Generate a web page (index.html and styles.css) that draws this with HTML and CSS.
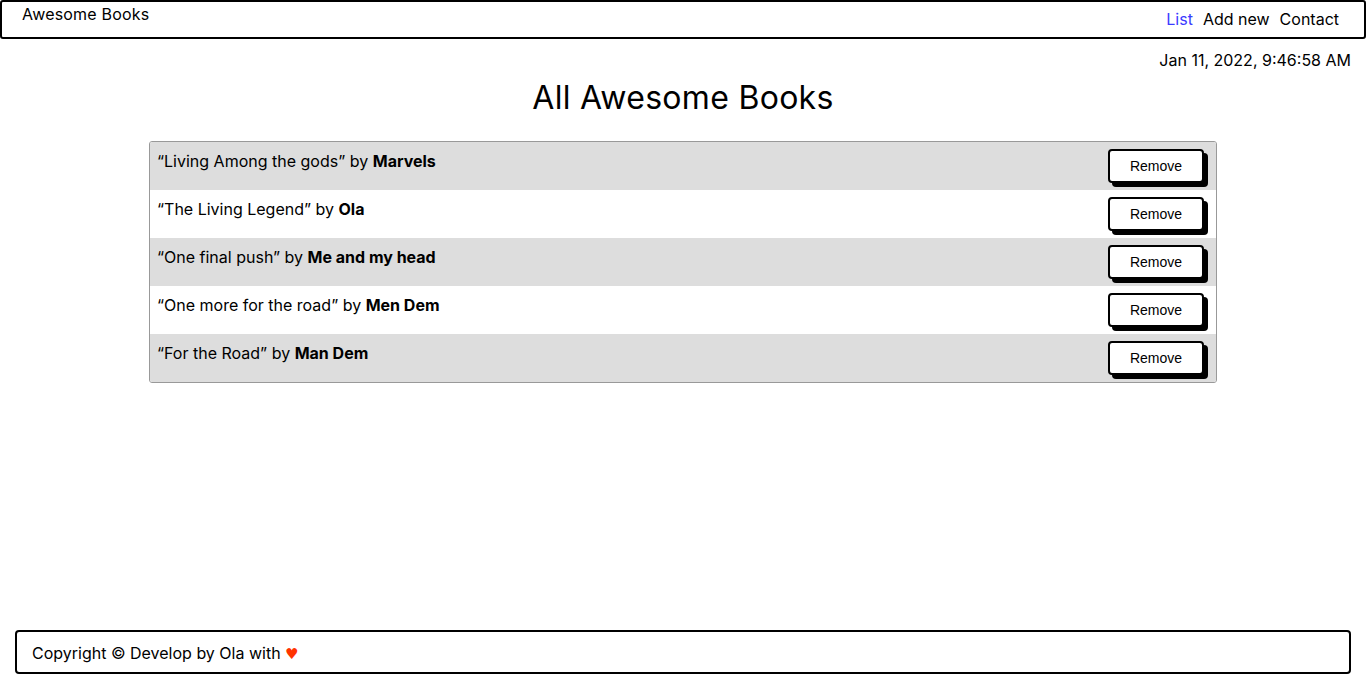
FILE: index.html
```html
<!DOCTYPE html>
<html lang="en">
<head>
<meta charset="utf-8">
<title>Awesome Books</title>
<link rel="stylesheet" href="styles.css">
</head>
<body>
<header class="topbar">
  <span class="logo">Awesome Books</span>
  <nav class="nav">
    <a class="nav-link active" href="#">List</a>
    <a class="nav-link" href="#">Add new</a>
    <a class="nav-link" href="#">Contact</a>
  </nav>
</header>
<main class="main">
  <p class="date">Jan 11, 2022, 9:46:58 AM</p>
  <h1 class="title">All Awesome Books</h1>
  <ul class="book-list">
    <li class="book odd"><span class="book-text">“Living Among the gods” by <b>Marvels</b></span><button class="remove">Remove</button></li>
    <li class="book"><span class="book-text">“The Living Legend” by <b>Ola</b></span><button class="remove">Remove</button></li>
    <li class="book odd"><span class="book-text">“One final push” by <b>Me and my head</b></span><button class="remove">Remove</button></li>
    <li class="book"><span class="book-text">“One more for the road” by <b>Men Dem</b></span><button class="remove">Remove</button></li>
    <li class="book odd"><span class="book-text">“For the Road” by <b>Man Dem</b></span><button class="remove">Remove</button></li>
  </ul>
</main>
<footer class="footer">
  <p class="copy">Copyright © Develop by Ola with <span class="heart">♥</span></p>
</footer>
</body>
</html>
```
FILE: styles.css
```css
* { box-sizing: border-box; }
html, body { height: 100%; }
body {
  margin: 0;
  font-family: "Inter", "Open Sans", sans-serif;
  font-size: 16px;
  color: #000;
  display: flex;
  flex-direction: column;
  min-height: 100vh;
}
.topbar {
  height: 39px;
  border: 2px solid #000;
  border-radius: 3px;
  display: flex;
  justify-content: space-between;
  align-items: flex-start;
  padding: 0 25px 0 20px;
}
.logo { padding-top: 2px; line-height: 20px; letter-spacing: 0.2px; }
.nav { display: flex; gap: 10px; padding-top: 7px; line-height: 20px; }
.nav-link { color: #000; text-decoration: none; }
.nav-link.active { color: #3b3bff; }
.main { padding: 0 15px; flex: 1; }
.date { margin: 10px 0 0; text-align: right; line-height: 22px; }
.title {
  margin: 3px 0 0;
  text-align: center;
  font-weight: 400;
  font-size: 32px;
  line-height: 48px;
  letter-spacing: 0.3px;
}
.book-list {
  list-style: none;
  margin: 19px auto 0;
  padding: 0;
  width: 1068px;
  border: 1px solid #999;
  border-radius: 3px;
  overflow: hidden;
}
.book {
  height: 48px;
  display: flex;
  justify-content: space-between;
  align-items: flex-start;
  padding: 7px 12px 0 7px;
}
.book.odd { background: #ddd; }
.book-text { line-height: 22px; padding-top: 1px; }
.book-text b { font-weight: 700; }
.remove {
  width: 96px;
  height: 34px;
  background: #fff;
  border: 2px solid #000;
  border-radius: 4px;
  box-shadow: 4px 4px 0 #000;
  font-family: "Liberation Sans", Arial, sans-serif;
  font-size: 14px;
  color: #000;
  padding: 0;
}
.footer {
  margin: 0 15px;
  height: 44px;
  border: 2px solid #000;
  border-radius: 4px;
  display: flex;
  align-items: center;
  padding: 2px 15px 0;
}
.copy { margin: 0; line-height: 22px; }
.heart { color: #ff3300; font-family: "DejaVu Sans", sans-serif; font-size: 15px; }
```
